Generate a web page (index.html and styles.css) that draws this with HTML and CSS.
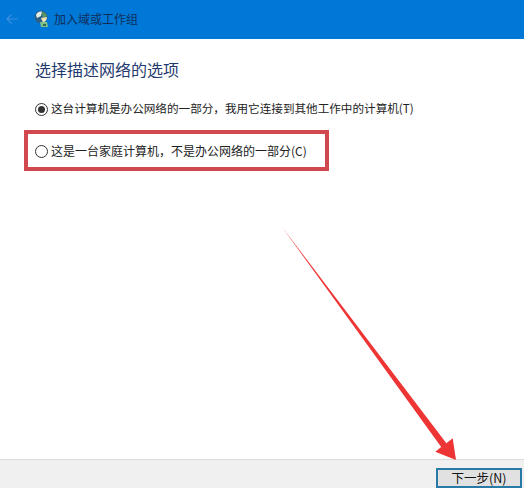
FILE: index.html
```html
<!DOCTYPE html>
<html lang="zh-CN">
<head>
<meta charset="utf-8">
<title>加入域或工作组</title>
<link rel="stylesheet" href="styles.css">
</head>
<body>
<div class="app">
  <header class="titlebar">
    <svg class="back" viewBox="0 0 12 12" width="12" height="12"><path d="M5.500 1.500 1 6l4.500 4.500M1 6h11" fill="none" stroke="#3f8fdc" stroke-width="1.2"/></svg>
    <svg class="logo" viewBox="0 0 14 18" width="14" height="18">
      <circle cx="7" cy="7" r="6.500" fill="#2f5f86"/>
      <path d="M2 5C3 2 6 1 8 1.500L7 6 3 8Z" fill="#dfeee6"/>
      <path d="M8 2c2 0 4 2 5 4L9 8Z" fill="#5a9a5e"/>
      <path d="M7 8l6-1c0 3-2 5-4 5.500Z" fill="#efe7b8"/>
      <path d="M6 12h7l1 5H7Z" fill="#7fc08c"/>
      <path d="M9 14h3v2H9Z" fill="#2f6f4a"/>
    </svg>
    <span class="title">加入域或工作组</span>
  </header>
  <main class="content">
    <h1 class="heading">选择描述网络的选项</h1>
    <div class="option first">
      <span class="radio checked"></span>
      <span>这台计算机是办公网络的一部分，我用它连接到其他工作中的计算机(T)</span>
    </div>
    <div class="highlight">
      <div class="option second">
        <span class="radio"></span>
        <span>这是一台家庭计算机，不是办公网络的一部分(C)</span>
      </div>
    </div>
  </main>
  <footer class="footer">
    <button class="next">下一步(N)</button>
  </footer>
  <svg class="arrow" viewBox="0 0 524 488" width="524" height="488">
    <path d="M282 227 446.400 443.200 452.700 438.300 456 460 435.300 451.700 441.200 447.100Z" fill="#ee3535"/>
  </svg>
</div>
</body>
</html>
```
FILE: styles.css
```css
* { box-sizing: border-box; }
html, body { margin: 0; padding: 0; }
body { width: 524px; height: 488px; overflow: hidden; background: #fff; font-family: "Noto Sans CJK SC", "Liberation Sans", sans-serif; }
.app { position: relative; width: 524px; height: 488px; display: flex; flex-direction: column; }
.titlebar { height: 39px; background: #0078d7; display: flex; align-items: center; padding: 0 0 2px 6px; flex: none; }
.back { margin-right: 16px; }
.logo { margin-right: 6px; }
.title { font-size: 12px; color: #0f2f5a; }
.content { flex: 1; padding: 20px 24px 0; }
.heading { margin: 0 0 1px 11px; font-size: 16px; line-height: 20px; font-weight: 400; color: #1f3a6e; }
.option { display: flex; align-items: center; gap: 3px; font-size: 11.6px; line-height: 16px; color: #222; }
.option.first { margin: 21px 0 0 11px; }
.option.second { font-size: 12px; }
.highlight { width: 305px; height: 41px; margin-top: 14px; border: 4px solid #d2484f; display: flex; align-items: center; padding-left: 7px; }
.radio { width: 13px; height: 13px; margin-top: 2px; flex: none; border: 1px solid #333; border-radius: 50%; background: #fff; position: relative; }
.radio.checked::after { content: ""; position: absolute; inset: 2px; border-radius: 50%; background: #333; }
.footer { height: 29px; flex: none; background: #f0f0f0; border-top: 1px solid #dcdcdc; display: flex; justify-content: flex-end; align-items: flex-start; padding: 8px 2px 0 0; }
.next { width: 86px; height: 20px; border: 2px solid #2a7aa8; background: #e1e1e1; font: 12.5px/16px "Noto Sans CJK SC", "Liberation Sans", sans-serif; color: #111; padding: 0; }
.arrow { position: absolute; left: 0; top: 0; pointer-events: none; }
```
